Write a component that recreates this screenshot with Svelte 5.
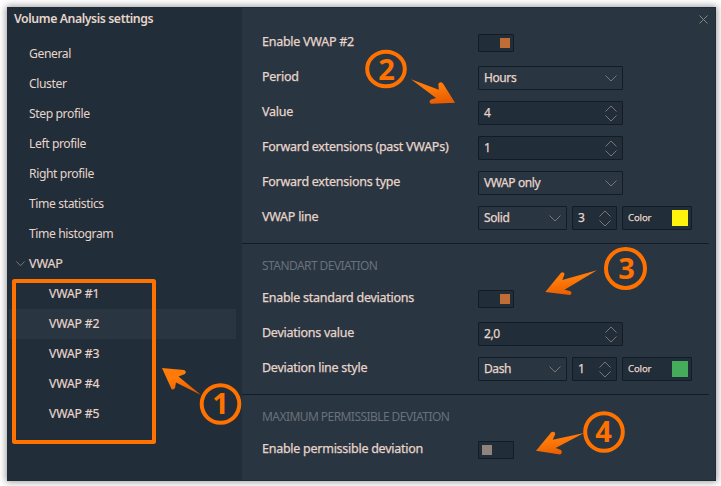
<script>
  const items = ['General', 'Cluster', 'Step profile', 'Left profile', 'Right profile', 'Time statistics', 'Time histogram'];
  const children = ['VWAP #1', 'VWAP #2', 'VWAP #3', 'VWAP #4', 'VWAP #5'];
  const selected = 'VWAP #2';
  const sections = [
    {
      rows: [
        { label: 'Enable VWAP #2', kind: 'toggle', on: true },
        { label: 'Period', kind: 'select', value: 'Hours' },
        { label: 'Value', kind: 'number', value: '4' },
        { label: 'Forward extensions (past VWAPs)', kind: 'number', value: '1' },
        { label: 'Forward extensions type', kind: 'select', value: 'VWAP only' },
        { label: 'VWAP line', kind: 'line', value: 'Solid', width: '3', color: '#fff20d' }
      ]
    },
    {
      title: 'STANDART DEVIATION',
      rows: [
        { label: 'Enable standard deviations', kind: 'toggle', on: true },
        { label: 'Deviations value', kind: 'number', value: '2,0' },
        { label: 'Deviation line style', kind: 'line', value: 'Dash', width: '1', color: '#44ac5a' }
      ]
    },
    {
      title: 'MAXIMUM PERMISSIBLE DEVIATION',
      rows: [{ label: 'Enable permissible deviation', kind: 'toggle', on: false }]
    }
  ];
</script>

{#snippet select(value, small)}
  <div class="field select" class:small>
    <span>{value}</span>
    <svg width="12" height="7" viewBox="0 0 12 7"><path d="M.5.5 6 6 11.5.5" /></svg>
  </div>
{/snippet}

{#snippet number(value, small)}
  <div class="field number" class:small>
    <span>{value}</span>
    <svg width="12" height="17" viewBox="0 0 12 17"><path d="M.5 6.5 6 1l5.5 5.5M.5 10.5 6 16l5.5-5.5" /></svg>
  </div>
{/snippet}

<div class="frame">
  <div class="window">
    <nav>
      <h1>Volume Analysis settings</h1>
      {#each items as item}
        <div class="item">{item}</div>
      {/each}
      <div class="item group">
        <svg width="9" height="6" viewBox="0 0 9 6"><path d="M.5.5 4.5 4.8 8.5.5" /></svg>
        <span>VWAP</span>
      </div>
      {#each children as child}
        <div class="item child" class:selected={child === selected}>{child}</div>
      {/each}
    </nav>
    <main>
      <div class="top">
        <svg width="9" height="9" viewBox="0 0 9 9"><path d="M.5.5l8 8M8.5.5l-8 8" /></svg>
      </div>
      {#each sections as section}
        <section>
          {#if section.title}<h2>{section.title}</h2>{/if}
          {#each section.rows as row}
            <div class="row">
              <div class="label">{row.label}</div>
              {#if row.kind === 'toggle'}
                <div class="toggle" class:on={row.on}><i></i></div>
              {:else if row.kind === 'select'}
                {@render select(row.value, false)}
              {:else if row.kind === 'number'}
                {@render number(row.value, false)}
              {:else}
                {@render select(row.value, true)}
                {@render number(row.width, true)}
                <div class="field color"><span>Color</span><b style:background={row.color}></b></div>
              {/if}
            </div>
          {/each}
        </section>
      {/each}
    </main>
  </div>

  <svg class="notes" width="721" height="486" viewBox="0 0 721 486">
    <defs>
      <linearGradient id="glow" x1="0" y1="0" x2="0.3" y2="1">
        <stop offset="0.45" stop-color="#ff7a08" />
        <stop offset="1" stop-color="#e95f00" />
      </linearGradient>
    </defs>
    <rect x="14" y="281" width="140" height="161" rx="0.5" />
    <circle cx="220.5" cy="404" r="18.8" />
    <ellipse cx="386" cy="69" rx="18.8" ry="17.3" />
    <circle cx="625.5" cy="268.5" r="19.5" />
    <circle cx="604" cy="432" r="18.8" />
    <g class="arrows">
      <path d="M162 368 184 370Q187 371 185 374L178.5 376.5 201 395 176 382.5 175 388Q172 391 171 388Z" />
      <path d="M455 102.7 443 83.5Q440 81 438.3 84L438.8 89.8 411 79.3 436 98 431 99.5Q428 102 431 103.7Z" />
      <path d="M545.3 292 561 272.8Q564 271 564.5 274.5L562.3 280 597 270.3 564.5 289.7 570 291Q573 293 570 295Z" />
      <path d="M536 450.7 551.5 432Q555 431 555.3 434L552.7 439.7 584 433 555.7 448 561 450Q563 453 560 454.5Z" />
    </g>
    <text x="220.5" y="414">1</text>
    <text x="386.5" y="80">2</text>
    <text x="626.5" y="279">3</text>
    <text x="603.5" y="442">4</text>
  </svg>
</div>

<style>
  :global(body) { background: #fff; }
  .frame {
    position: relative;
    box-sizing: border-box;
    width: 721px;
    height: 486px;
    padding: 7px 5px 5px 7px;
    overflow: hidden;
    font: 12.5px/20px "Noto Sans", sans-serif;
    letter-spacing: -0.26px;
    color: #e6d5cb;
  }
  .window {
    box-sizing: border-box;
    display: flex;
    height: 474px;
    border: 1px solid #202d39;
    background: #2a3542;
    box-shadow: 0 0 7px 1px rgba(0, 0, 0, 0.4);
  }
  nav { flex: 0 0 234px; background: #212d39; }
  h1 { margin: 0; height: 31px; padding: 1px 0 0 6px; font-size: 12.3px; line-height: 20px; font-weight: 600; letter-spacing: -0.42px; box-sizing: border-box; }
  .item { height: 30px; line-height: 30px; padding-left: 21px; margin-right: 6px; font-size: 12.2px; letter-spacing: -0.42px; }
  .group { display: flex; align-items: center; padding-left: 8px; gap: 4px; font-size: 12.5px; letter-spacing: -0.1px; }
  .child { margin-left: 1px; padding-left: 40px; letter-spacing: -0.13px; }
  .group, .child { -webkit-text-stroke: 0.2px currentColor; }
  .selected { background: #2a3542; }
  svg { fill: none; stroke: #7c7571; }
  main { flex: 1; }
  .top { height: 23px; display: flex; justify-content: flex-end; padding: 0 7px 0 0; align-items: center; }
  .top svg { stroke: #8a8580; }
  section { padding: 0 0 2px 20px; margin-right: 6px; border-bottom: 1px solid #101c27; }
  section:last-child { border: 0; }
  h2 { margin: 0; height: 43px; line-height: 44px; font-size: 12px; font-weight: 400; letter-spacing: -0.56px; color: #68717b; }
  .row { height: 35px; display: flex; align-items: flex-start; gap: 5px; }
  .label { width: 211px; line-height: 22px; white-space: nowrap; -webkit-text-stroke: 0.25px currentColor; }
  .toggle { box-sizing: border-box; width: 36px; height: 18px; margin-top: 3px; padding: 3px; display: flex; border: 1px solid #111c26; border-radius: 1px; background: #212d39; }
  .toggle i { width: 10px; height: 10px; background: #8f837e; }
  .toggle.on { justify-content: flex-end; }
  .toggle.on i { background: #c06c35; }
  .field { box-sizing: border-box; width: 145px; height: 24px; display: flex; align-items: center; justify-content: space-between; padding: 0 5px; border: 1px solid #111c26; border-radius: 1px; background: #212d39; font-size: 12px; letter-spacing: -0.4px; -webkit-text-stroke: 0.25px currentColor; }
  .select { background: #2a3542; }
  .select.small { width: 89px; }
  .number.small { width: 45px; }
  .color { width: 70px; padding-right: 3px; font-size: 9.5px; letter-spacing: -0.1px; }
  .color b { width: 16px; height: 16px; }
  .notes { position: absolute; inset: 0; stroke: #ff7200; stroke-width: 4; }
  .arrows { fill: url(#glow); stroke: none; }
  text { fill: #ff7200; stroke: none; font: 700 29px "Noto Sans", sans-serif; letter-spacing: 0; text-anchor: middle; }
</style>
